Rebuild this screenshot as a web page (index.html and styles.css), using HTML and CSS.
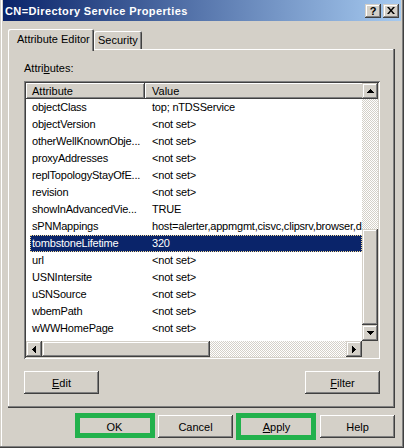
FILE: index.html
```html
<!DOCTYPE html>
<html lang="en">
<head>
  <meta charset="UTF-8" />
  <title>CN=Directory Service Properties</title>
  <link rel="stylesheet" href="styles.css">
</head>
<body>
  <div class="window">
    <div class="titlebar">
      <div class="title">CN=Directory Service Properties</div>
      <div class="cap-btn help-q">?</div>
      <div class="cap-btn">
        <svg width="8" height="7" viewBox="0 0 8 7"><path d="M0 0h2l2 2.4L6 0h2L5 3.5 8 7H6L4 4.6 2 7H0l3-3.5z" fill="#000"/></svg>
      </div>
    </div>

    <div class="tabs">
      <div class="tab active">Attribute Editor</div>
      <div class="tab">Security</div>
    </div>

    <div class="panel">
      <div class="label">Attri<u>b</u>utes:</div>

      <div class="listbox">
        <div class="listview">
          <div class="lv-head">
            <div class="hd hd-attr">Attribute</div>
            <div class="hd hd-val">Value</div>
          </div>
          <div class="row"><div class="c-attr">objectClass</div><div class="c-val">top; nTDSService</div></div>
          <div class="row"><div class="c-attr">objectVersion</div><div class="c-val">&lt;not set&gt;</div></div>
          <div class="row"><div class="c-attr">otherWellKnownObje...</div><div class="c-val">&lt;not set&gt;</div></div>
          <div class="row"><div class="c-attr">proxyAddresses</div><div class="c-val">&lt;not set&gt;</div></div>
          <div class="row"><div class="c-attr">replTopologyStayOfE...</div><div class="c-val">&lt;not set&gt;</div></div>
          <div class="row"><div class="c-attr">revision</div><div class="c-val">&lt;not set&gt;</div></div>
          <div class="row"><div class="c-attr">showInAdvancedVie...</div><div class="c-val">TRUE</div></div>
          <div class="row"><div class="c-attr">sPNMappings</div><div class="c-val">host=alerter,appmgmt,cisvc,clipsrv,browser,d</div></div>
          <div class="row sel"><div class="c-attr">tombstoneLifetime</div><div class="c-val">320</div></div>
          <div class="row"><div class="c-attr">url</div><div class="c-val">&lt;not set&gt;</div></div>
          <div class="row"><div class="c-attr">USNIntersite</div><div class="c-val">&lt;not set&gt;</div></div>
          <div class="row"><div class="c-attr">uSNSource</div><div class="c-val">&lt;not set&gt;</div></div>
          <div class="row"><div class="c-attr">wbemPath</div><div class="c-val">&lt;not set&gt;</div></div>
          <div class="row"><div class="c-attr">wWWHomePage</div><div class="c-val">&lt;not set&gt;</div></div>
        </div>

        <div class="vscroll">
          <div class="sb-btn"><svg width="7" height="4" viewBox="0 0 7 4"><path d="M3 0h1v1h1v1h1v1h1v1H0V3h1V2h1V1h1z" fill="#000"/></svg></div>
          <div class="track"><div class="thumb"></div></div>
          <div class="sb-btn"><svg width="7" height="4" viewBox="0 0 7 4"><path d="M0 0h7v1H6v1H5v1H4v1H3V3H2V2H1V1H0z" fill="#000"/></svg></div>
        </div>

        <div class="hscroll">
          <div class="sb-btn"><svg width="4" height="7" viewBox="0 0 4 7"><path d="M3 0h1v7H3V6H2V5H1V4H0V3h1V2h1V1h1z" fill="#000"/></svg></div>
          <div class="track"><div class="thumb"></div></div>
          <div class="sb-btn"><svg width="4" height="7" viewBox="0 0 4 7"><path d="M0 0h1v1h1v1h1v1h1v1H3v1H2v1H1v1H0z" fill="#000"/></svg></div>
        </div>

        <div class="corner"></div>
      </div>

      <div class="panel-actions">
        <button class="btn"><u>E</u>dit</button>
        <button class="btn"><u>F</u>ilter</button>
      </div>
    </div>

    <div class="footer">
      <button class="btn hl">OK</button>
      <button class="btn">Cancel</button>
      <button class="btn hl hl-tall"><u>A</u>pply</button>
      <button class="btn">Help</button>
    </div>
  </div>
</body>
</html>
```

FILE: styles.css
```css
*,
*::before,
*::after {
  box-sizing: border-box;
}
body {
  margin: 0;
  background: #d4d0c8;
  font-family: "Liberation Sans", Arial, sans-serif;
  font-size: 11px;
  color: #000;
}
u {
  text-decoration-thickness: 1px;
  text-underline-offset: 1px;
}

/* window frame */
.window {
  width: 404px;
  height: 448px;
  padding: 0 3px 3px 3px;
  display: flex;
  flex-direction: column;
  background: #d4d0c8;
  box-shadow: inset -1px -1px 0 #404040, inset -2px -2px 0 #808080,
    inset 1px 0 0 #d4d0c8, inset 2px 0 0 #fff;
}
.titlebar {
  height: 21px;
  flex: none;
  display: flex;
  align-items: center;
  padding: 0 2px;
  background: linear-gradient(to right, #0a246a, #a6caf0);
}
.title {
  flex: 1;
  color: #fff;
  font-weight: bold;
  font-size: 11px;
  letter-spacing: 0.4px;
  white-space: nowrap;
}
.cap-btn {
  width: 16px;
  height: 14px;
  margin-left: 2px;
  display: flex;
  align-items: center;
  justify-content: center;
  background: #d4d0c8;
  box-shadow: inset -1px -1px 0 #404040, inset 1px 1px 0 #d4d0c8,
    inset -2px -2px 0 #808080, inset 2px 2px 0 #fff;
}
.help-q {
  font-weight: bold;
  font-size: 11px;
  line-height: 14px;
}

/* tabs */
.tabs {
  display: flex;
  align-items: flex-start;
  height: 20px;
  margin: 8px 0 0 5px;
  position: relative;
  z-index: 1;
}
.tab {
  height: 18px;
  margin-top: 2px;
  padding: 0 4px;
  line-height: 19px;
  background: #d4d0c8;
  border-radius: 2px 2px 0 0;
  box-shadow: inset 1px 1px 0 #fff, inset -1px 0 0 #404040, inset -2px 0 0 #808080;
}
.tab.active {
  height: 22px;
  margin-top: 0;
  width: 86px;
  padding: 0 0 0 9px;
  line-height: 20px;
}

.panel {
  height: 359px;
  margin: 0 6px 0 5px;
  padding: 13px 15px 14px 16px;
  box-shadow: inset -1px -1px 0 #404040, inset -2px -2px 0 #808080, inset 1px 1px 0 #fff;
}
.label {
  line-height: 13px;
  margin-bottom: 6px;
}

/* list view with scrollbars */
.listbox {
  height: 278px;
  padding: 2px;
  display: grid;
  grid-template-columns: 1fr 16px;
  grid-template-rows: 1fr 16px;
  background: #d4d0c8;
  box-shadow: inset 1px 1px 0 #808080, inset -1px -1px 0 #fff,
    inset 2px 2px 0 #404040, inset -2px -2px 0 #d4d0c8;
}
.listview {
  background: #fff;
  overflow: hidden;
  min-width: 0;
  letter-spacing: -0.2px;
}
.lv-head {
  display: flex;
  height: 16px;
  letter-spacing: 0;
}
.hd {
  flex: none;
  line-height: 16px;
  background: #d4d0c8;
  box-shadow: inset -1px -1px 0 #404040, inset 1px 1px 0 #fff, inset -2px -2px 0 #808080;
}
.hd-attr {
  width: 119px;
  padding-left: 6px;
}
.hd-val {
  width: 300px;
  padding-left: 7px;
}
.row {
  display: flex;
  height: 17px;
  line-height: 17px;
  margin-left: 4px;
  white-space: nowrap;
}
.c-attr {
  flex: none;
  width: 115px;
  padding-left: 2px;
  overflow: hidden;
}
.c-val {
  flex: 1;
  padding-left: 7px;
  overflow: hidden;
}
.row.sel {
  background: #0a246a;
  color: #fff;
  outline: 1px dotted #f5db95;
  outline-offset: -1px;
}

.vscroll,
.hscroll {
  display: flex;
}
.vscroll {
  flex-direction: column;
}
.sb-btn,
.thumb {
  background: #d4d0c8;
  box-shadow: inset -1px -1px 0 #404040, inset 1px 1px 0 #d4d0c8,
    inset -2px -2px 0 #808080, inset 2px 2px 0 #fff;
}
.sb-btn {
  flex: none;
  width: 16px;
  height: 16px;
  display: flex;
  align-items: center;
  justify-content: center;
}
.track {
  flex: 1;
  display: flex;
  background-color: #fff;
  background-image: repeating-conic-gradient(#d4d0c8 0 25%, #fff 0 50%);
  background-size: 2px 2px;
}
.vscroll .track {
  flex-direction: column;
  justify-content: flex-end;
}
.vscroll .thumb {
  height: 96px;
}
.hscroll .thumb {
  width: 168px;
}
.corner {
  background: #d4d0c8;
}

/* push buttons */
.btn {
  width: 75px;
  height: 23px;
  padding: 0;
  border: 0;
  font-family: inherit;
  font-size: 11px;
  color: #000;
  background: #d4d0c8;
  box-shadow: inset -1px -1px 0 #404040, inset 1px 1px 0 #fff,
    inset -2px -2px 0 #808080, inset 2px 2px 0 #d4d0c8;
}
.panel-actions {
  display: flex;
  justify-content: space-between;
  margin-top: 12px;
}
.footer {
  display: flex;
  justify-content: flex-end;
  gap: 6px;
  margin-top: 7px;
  padding-right: 6px;
}
.hl {
  position: relative;
}
.hl::after {
  content: "";
  position: absolute;
  left: -2px;
  top: -2px;
  width: 80px;
  height: 25px;
  border: 5px solid #22b14c;
  pointer-events: none;
}
.hl-tall::after {
  left: -3px;
  height: 27px;
}
```
